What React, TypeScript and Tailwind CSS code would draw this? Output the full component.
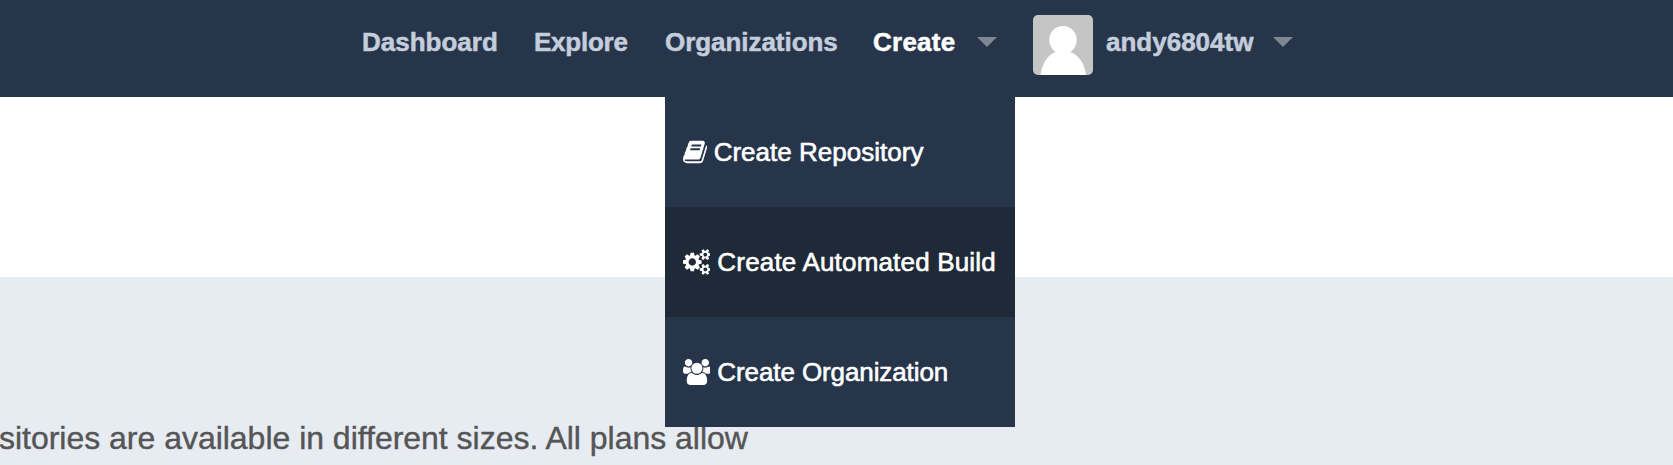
import type { ReactNode } from "react";

const BOOK =
  "M1639 478q40 57 18 129l-275 906q-19 64-76.5 107.5t-122.5 43.5h-923q-77 0-148.5-53.5t-99.5-131.5q-24-67-2-127 0-4 3-27t4-37q1-8-3-21.5t-3-19.5q2-11 8-21t16.5-23.5 16.5-23.5q23-38 45-91.5t30-91.5q3-10 .5-30t-.5-28q3-11 17-28t17-23q21-36 42-92t25-90q1-9-2.5-32t.5-28q4-13 22-30.5t22-22.5q19-26 42.5-84.5t27.5-96.5q1-8-3-25.5t-2-26.5q2-8 9-18t18-23 17-21q8-12 16.5-30.5t15-35 16-36 19.5-32 26.5-23.5 36-11.5 47.5 5.5l-1 3q38-9 51-9h761q74 0 114 56t18 130l-274 906q-36 119-71.5 153.5t-128.5 34.5h-869q-27 0-38 15-11 16-1 43 24 70 144 70h923q29 0 56-15.5t35-41.5l300-987q7-22 5-57 38 15 59 43zm-1064 2q-4 13 2 22.5t20 9.5h608q13 0 25.5-9.5t16.5-22.5l21-64q4-13-2-22.5t-20-9.5h-608q-13 0-25.5 9.5t-16.5 22.5zm-83 256q-4 13 2 22.5t20 9.5h608q13 0 25.5-9.5t16.5-22.5l21-64q4-13-2-22.5t-20-9.5h-608q-13 0-25.5 9.5t-16.5 22.5z";
const COGS =
  "M896 896q0-106-75-181t-181-75-181 75-75 181 75 181 181 75 181-75 75-181zm768 512q0-52-38-90t-90-38-90 38-38 90q0 53 37.5 90.5t90.5 37.5 90.5-37.5 37.5-90.5zm0-1024q0-52-38-90t-90-38-90 38-38 90q0 53 37.5 90.5t90.5 37.5 90.5-37.5 37.5-90.5zm-384 421v185q0 10-7 19.5t-16 10.5l-155 24q-11 35-32 76 34 48 90 115 7 11 7 20 0 12-7 19-23 30-82.5 89.5t-78.5 59.5q-11 0-21-7l-115-90q-37 19-77 31-11 108-23 155-7 24-30 24h-186q-11 0-20-7.5t-10-17.5l-23-153q-34-10-75-31l-118 89q-7 7-20 7-11 0-21-8-144-133-144-160 0-9 7-19 10-14 41-53t47-61q-23-44-35-82l-152-24q-10-1-17-9.5t-7-19.5v-185q0-10 7-19.5t16-10.5l155-24q11-35 32-76-34-48-90-115-7-11-7-20 0-12 7-20 22-30 82-89t79-59q11 0 21 7l115 90q34-18 77-32 11-108 23-154 7-24 30-24h186q11 0 20 7.5t10 17.5l23 153q34 10 75 31l118-89q8-7 20-7 11 0 21 8 144 133 144 160 0 8-7 19-12 16-42 54t-45 60q23 48 34 82l152 23q10 2 17 10.5t7 19.5zm640 533v140q0 16-149 31-12 27-30 52 51 113 51 138 0 4-4 7-122 71-124 71-8 0-46-47t-52-68q-20 2-30 2t-30-2q-14 21-52 68t-46 47q-2 0-124-71-4-3-4-7 0-25 51-138-18-25-30-52-149-15-149-31v-140q0-16 149-31 13-29 30-52-51-113-51-138 0-4 4-7 4-2 35-20t59-34 30-16q8 0 46 46.5t52 67.5q20-2 30-2t30 2q51-71 92-112l6-2q4 0 124 70 4 3 4 7 0 25-51 138 17 23 30 52 149 15 149 31zm0-1024v140q0 16-149 31-12 27-30 52 51 113 51 138 0 4-4 7-122 71-124 71-8 0-46-47t-52-68q-20 2-30 2t-30-2q-14 21-52 68t-46 47q-2 0-124-71-4-3-4-7 0-25 51-138-18-25-30-52-149-15-149-31v-140q0-16 149-31 13-29 30-52-51-113-51-138 0-4 4-7 4-2 35-20t59-34 30-16q8 0 46 46.5t52 67.5q20-2 30-2t30 2q51-71 92-112l6-2q4 0 124 70 4 3 4 7 0 25-51 138 17 23 30 52 149 15 149 31z";
const USERS =
  "M593 896q-162 5-265 128h-134q-82 0-138-40.5t-56-118.5q0-353 124-353 6 0 43.5 21t97.5 42.5 119 21.5q67 0 133-23-5 37-5 66 0 139 81 256zm1071 637q0 120-73 189.5t-194 69.5h-874q-121 0-194-69.5t-73-189.5q0-53 3.5-103.5t14-109 26.5-108.5 43-97.5 62-81 85.5-53.5 111.5-20q10 0 43 21.5t73 48 107 48 135 21.5 135-21.5 107-48 73-48 43-21.5q61 0 111.5 20t85.5 53.5 62 81 43 97.5 26.5 108.5 14 109 3.5 103.5zm-1024-1277q0 106-75 181t-181 75-181-75-75-181 75-181 181-75 181 75 75 181zm704 384q0 159-112.5 271.5t-271.5 112.5-271.5-112.5-112.5-271.5 112.5-271.5 271.5-112.5 271.5 112.5 112.5 271.5zm576 225q0 78-56 118.5t-138 40.5h-134q-103-123-265-128 81-117 81-256 0-29-5-66 66 23 133 23 59 0 119-21.5t97.5-42.5 43.5-21q124 0 124 353zm-128-609q0 106-75 181t-181 75-181-75-75-181 75-181 181-75 181 75 75 181z";

function Caret() {
  return (
    <svg viewBox="0 0 20 10" className="mt-[37px] h-2.5 w-5 shrink-0 fill-[#7e8692]">
      <path d="M0 0h20L10 10z" />
    </svg>
  );
}

function Avatar() {
  return (
    <svg viewBox="0 0 60 60" className="mt-[15px] size-[60px] shrink-0 rounded-[5px] bg-[#c5c5c5] fill-white">
      <ellipse cx="30" cy="25" rx="13.7" ry="14" />
      <path d="M7.5 60C9 48 15 39.500 23.500 36.500h13C45 39.500 51.500 48 53 60z" />
    </svg>
  );
}

function NavLink({ children, className }: { children: ReactNode; className: string }) {
  return (
    <a className={`mt-[27px] shrink-0 text-[26px] leading-[30px] font-bold [-webkit-text-stroke:0.5px_currentColor] ${className}`}>
      {children}
    </a>
  );
}

function MenuItem({ path, width, label, className }: { path: string; width: number; label: string; className: string }) {
  return (
    <li className={`flex h-[110px] items-start pl-[17.5px] text-[26px] leading-[30px] text-white ${className}`}>
      <svg viewBox={`0 0 ${width} 1792`} className="mt-[42px] h-[26px] w-auto shrink-0 fill-white">
        <path d={path} />
      </svg>
      <span className="mt-10 ml-[7px] [-webkit-text-stroke:0.6px_white]">{label}</span>
    </li>
  );
}

export default function App() {
  return (
    <div className="relative flex h-[465px] w-full flex-col overflow-hidden bg-white font-['Liberation_Sans',Arial,sans-serif] whitespace-nowrap">
      <nav className="flex h-[97px] shrink-0 items-start bg-[#27354b] pl-[362px] text-[#c4cddb]">
        <NavLink className="w-[172px]">Dashboard</NavLink>
        <NavLink className="w-[131px] tracking-[-0.25px]">Explore</NavLink>
        <NavLink className="w-[208px] tracking-[-0.05px]">Organizations</NavLink>
        <NavLink className="w-[104px] tracking-[0.25px] text-white">Create</NavLink>
        <Caret />
        <div className="w-9 shrink-0" />
        <Avatar />
        <NavLink className="ml-[13px] w-[167px]">andy6804tw</NavLink>
        <Caret />
      </nav>
      <div className="h-[180px] shrink-0" />
      <section className="flex-1 bg-[#e7ecf3] pt-[143px]">
        <p className="-ml-px text-[32px] leading-9 tracking-[-0.02px] text-[#555555] [-webkit-text-stroke:0.4px_#555555]">
          sitories are available in different sizes. All plans allow
        </p>
      </section>
      <ul className="absolute top-[97px] left-[665px] w-[350px] bg-[#27354b]">
        <MenuItem path={BOOK} width={1664} label="Create Repository" className="tracking-[0.02px]" />
        <MenuItem path={COGS} width={1920} label="Create Automated Build" className="bg-[#1f2a38] tracking-[0.18px]" />
        <MenuItem path={USERS} width={1920} label="Create Organization" className="tracking-[-0.1px]" />
      </ul>
    </div>
  );
}
